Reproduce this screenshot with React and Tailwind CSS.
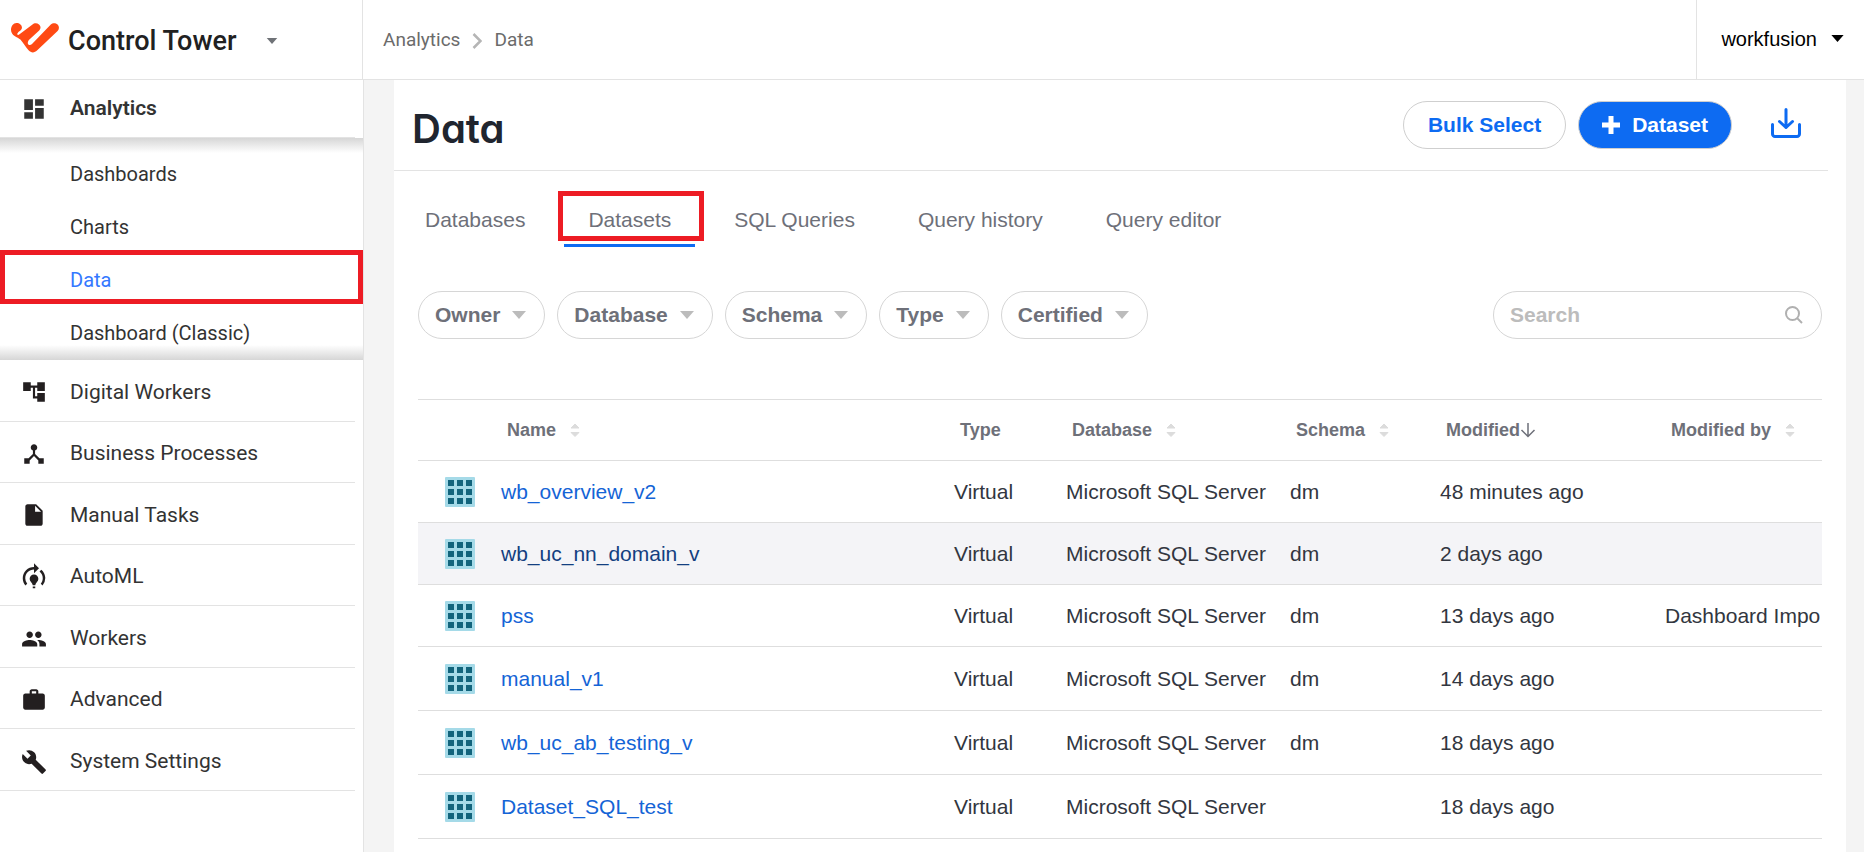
// src/App.jsx
import React, { useState } from 'react';
import {
  MdAccountTree,
  MdBuild,
  MdDashboard,
  MdDeviceHub,
  MdInsertDriveFile,
  MdModelTraining,
  MdPeople,
  MdWork,
} from 'react-icons/md';

const analyticsLinks = ['Dashboards', 'Charts', 'Data', 'Dashboard (Classic)'];

const sections = [
  { label: 'Digital Workers', Icon: MdAccountTree },
  { label: 'Business Processes', Icon: MdDeviceHub },
  { label: 'Manual Tasks', Icon: MdInsertDriveFile },
  { label: 'AutoML', Icon: MdModelTraining, size: 30 },
  { label: 'Workers', Icon: MdPeople },
  { label: 'Advanced', Icon: MdWork },
  { label: 'System Settings', Icon: MdBuild },
];

const tabs = ['Databases', 'Datasets', 'SQL Queries', 'Query history', 'Query editor'];

const filters = ['Owner', 'Database', 'Schema', 'Type', 'Certified'];

const columns = [
  { label: 'Name', width: 'w-auto', sort: 'both' },
  { label: 'Type', width: 'w-28' },
  { label: 'Database', width: 'w-56', sort: 'both' },
  { label: 'Schema', width: 'w-[150px]', sort: 'both' },
  { label: 'Modified', width: 'w-[225px]', sort: 'desc' },
  { label: 'Modified by', width: 'w-[162px]', sort: 'both' },
];

const datasets = [
  { name: 'wb_overview_v2', schema: 'dm', modified: '48 minutes ago', by: '' },
  { name: 'wb_uc_nn_domain_v', schema: 'dm', modified: '2 days ago', by: '', active: true },
  { name: 'pss', schema: 'dm', modified: '13 days ago', by: 'Dashboard Impo' },
  { name: 'manual_v1', schema: 'dm', modified: '14 days ago', by: '', tall: true },
  { name: 'wb_uc_ab_testing_v', schema: 'dm', modified: '18 days ago', by: '', tall: true },
  { name: 'Dataset_SQL_test', schema: '', modified: '18 days ago', by: '', tall: true },
];

function Logo() {
  return (
    <svg width="48" height="30" viewBox="0 0 48 30" fill="#ff4a14" className="mb-[3px]" aria-hidden="true">
      <path d="M5.5 0C9 0 11.6 2.8 10.8 5.6 10.2 7.8 7.4 8.6 6.4 10.4 5.8 11.8 7 12.6 8.2 11.6L21.5 1.6C23 0 26-.2 28 1.4 30 3 30 5.6 28.2 7.4L18.4 16.6C16.6 18.4 16.4 20.6 17.4 21.6 18.6 22.6 20 22 21 21L39.8 1.6C41.6-.3 44.6-.3 46.6 1.6 48.4 3.4 48.4 6 46.6 8L26 27.6C23.6 30 20 30 17.8 27.6 14.6 24.4 12 19.4 9.4 16.6 6.6 14 0 13 0 6.8 0 3 2.4 0 5.5 0Z" />
    </svg>
  );
}

function Caret({ className }) {
  return (
    <svg viewBox="0 0 14 8" className={className} fill="currentColor" aria-hidden="true">
      <path d="M0 0h14L7 8z" />
    </svg>
  );
}

function SortIcon() {
  return (
    <svg width="10" height="14" viewBox="0 0 10 14" fill="#dcdcdc" stroke="#dcdcdc" strokeLinejoin="round" aria-hidden="true">
      <path d="M1 5 5 1l4 4z" />
      <path d="M1 9.5 5 13.5l4-4z" />
    </svg>
  );
}

function DatasetIcon() {
  return (
    <svg width="30" height="30" viewBox="0 0 30 30" className="block">
      <rect width="30" height="30" rx="1" fill="#a5dae8" />
      {[3, 12, 21].map((y) =>
        [3, 12, 21].map((x) => <rect key={`${x}-${y}`} x={x} y={y} width="6" height="6" fill="#12647c" />)
      )}
    </svg>
  );
}

function Sidebar() {
  return (
    <nav className="w-[364px] shrink-0 border-r border-[#e3e3e3] bg-white text-[#333]">
      <div className="mr-2 border-b border-[#e3e3e3]">
        <a href="#analytics" className="flex h-[57px] items-center pl-[21px] text-[21px] font-semibold">
          <MdDashboard size={26} />
          <span className="ml-[23px]">Analytics</span>
        </a>
      </div>

      {/* Open section with inner shadows at the top and the bottom */}
      <ul className="bg-[linear-gradient(#d6d6d6,#fff_15px,#fff_calc(100%-15px),#d6d6d6)] pt-[9px] pb-px">
        {analyticsLinks.map((label) => (
          <li key={label} className="relative">
            <a
              href="#data"
              className={`flex h-[53px] items-center pl-[70px] text-[20px] ${label === 'Data' ? 'text-[#3478ff]' : ''}`}
            >
              {label}
            </a>
            {label === 'Data' && (
              <span className="pointer-events-none absolute inset-x-0 -top-[3px] h-[54px] border-[5px] border-[#ed1c24]" />
            )}
          </li>
        ))}
      </ul>

      <ul className="mr-2 grid h-[431px] auto-rows-fr">
        {sections.map(({ label, Icon, size = 26 }) => (
          <li key={label} className="border-b border-[#e3e3e3]">
            <a href="#section" className="flex h-full items-center pt-1 pl-[21px] text-[21px]">
              <span className="flex w-[26px] justify-center text-[#231f20]">
                <Icon size={size} className="shrink-0" />
              </span>
              <span className="ml-[23px]">{label}</span>
            </a>
          </li>
        ))}
      </ul>
    </nav>
  );
}

function App() {
  const [activeTab, setActiveTab] = useState('Datasets');
  const [search, setSearch] = useState('');

  return (
    <div className="flex min-h-screen flex-col bg-white font-[Roboto,sans-serif]">
      <header className="flex h-20 border-b border-[#e3e3e3]">
        <div className="flex w-[363px] shrink-0 items-center border-r border-[#e3e3e3] pl-[11px]">
          <Logo />
          <button className="ml-[9px] flex items-center gap-[30px] pt-[3px] text-[27px] font-medium text-[#212121]">
            Control Tower
            <Caret className="h-[6px] w-3 text-[#6f7277]" />
          </button>
        </div>
        <nav className="flex flex-1 items-center gap-3 pt-[2px] pl-5 text-[19px] text-[#6b6b6b]">
          <a href="#analytics">Analytics</a>
          <svg width="10" height="16" viewBox="0 0 10 16" fill="none" stroke="#b5b5b5" strokeWidth="2.5">
            <path d="m1.5 1 7 7-7 7" />
          </svg>
          <a href="#data">Data</a>
        </nav>
        <button className="flex items-center gap-[14px] border-l border-[#e3e3e3] pr-5 pb-[2px] pl-6 font-['Liberation_Sans',sans-serif] text-[20px] text-black">
          workfusion
          <Caret className="h-[7px] w-[13px]" />
        </button>
      </header>

      <div className="flex flex-1">
        <Sidebar />

        <div className="min-w-0 flex-1 bg-[#f4f4f4] pr-[18px] pl-[30px]">
          <main className="h-full bg-white font-['Liberation_Sans',sans-serif] text-[21px]">
            {/* Page title and actions */}
            <div className="mr-[18px] flex h-[91px] items-center border-b border-[#e3e3e3] pr-[27px] pl-[18px]">
              <h1 className="mt-2 flex-1 font-[Inter,sans-serif] text-[40px] font-semibold text-[#20252f] [font-feature-settings:'cv11']">
                Data
              </h1>
              <button className="h-12 rounded-full border border-[#cfcfcf] px-6 font-bold text-[#0d6bf2]">
                Bulk Select
              </button>
              <button className="ml-3 flex h-12 items-center gap-3 rounded-full border border-[#cfcfcf] bg-[#0d6bf2] px-[23px] font-bold text-white">
                <svg width="18" height="18" viewBox="0 0 18 18" stroke="currentColor" strokeWidth="5" aria-hidden="true">
                  <path d="M9 0v18M0 9h18" />
                </svg>
                Dataset
              </button>
              <button aria-label="Import dataset" className="mb-1 ml-[39px] text-[#0d6bf2]">
                <svg
                  width="30"
                  height="30"
                  viewBox="0 0 30 30"
                  fill="none"
                  stroke="currentColor"
                  strokeWidth="3"
                  strokeLinecap="round"
                  strokeLinejoin="round"
                >
                  <path d="M1.5 16.5V26a2.5 2.5 0 0 0 2.5 2.5h22a2.5 2.5 0 0 0 2.5-2.5v-9.5" />
                  <path d="M15 1.5V19.500M8.5 13.5l6.5 6 6.5-6" />
                </svg>
              </button>
            </div>

            {/* Tabs */}
            <div role="tablist" className="flex gap-[15px] pt-5 pl-[7px] text-[#6e7079]">
              {tabs.map((tab) => (
                <button
                  key={tab}
                  role="tab"
                  aria-selected={tab === activeTab}
                  onClick={() => setActiveTab(tab)}
                  className={`relative h-14 border-b-[3px] px-6 pt-1 ${tab === activeTab ? 'border-[#0d6bf2]' : 'border-transparent'}`}
                >
                  {tab}
                  {tab === 'Datasets' && (
                    <span className="pointer-events-none absolute top-0 -right-[9px] -left-[6px] h-[50px] border-[5px] border-[#ed1c24]" />
                  )}
                </button>
              ))}
            </div>

            <div className="px-6">
              {/* Filters and search */}
              <div className="mt-11 flex gap-3">
                {filters.map((filter) => (
                  <button
                    key={filter}
                    className="flex h-12 items-center gap-3 rounded-full border border-[#d6d6d6] pr-[18px] pl-4 font-bold text-[#6e7079]"
                  >
                    {filter}
                    <Caret className="h-2 w-[14px] text-[#bcbcbc]" />
                  </button>
                ))}
                <label className="ml-auto flex h-12 w-[329px] items-center rounded-full border border-[#d6d6d6] pr-[18px] pl-4">
                  <input
                    type="text"
                    aria-label="Search"
                    placeholder="Search"
                    value={search}
                    onChange={(e) => setSearch(e.target.value)}
                    className="min-w-0 flex-1 font-bold text-[#6e7079] outline-none placeholder:text-[#bcbcbc]"
                  />
                  <svg width="18" height="18" viewBox="0 0 18 18" fill="none" stroke="#b0b0b0" strokeWidth="2">
                    <circle cx="7.5" cy="7.5" r="6.5" />
                    <path d="m12 12 5 5" />
                  </svg>
                </label>
              </div>

              {/* Dataset list */}
              <table className="mt-[60px] w-full table-fixed border-separate border-spacing-0 text-left text-[#323640]">
                <thead>
                  <tr className="h-[62px] text-[18px] text-[#6e7079]">
                    <th className="w-[78px] border-y border-[#dedede]" />
                    {columns.map(({ label, width, sort }) => (
                      <th key={label} className={`border-y border-[#dedede] p-0 pl-[11px] ${width}`}>
                        <div className="flex items-center whitespace-nowrap">
                          {label}
                          {sort === 'both' && (
                            <span className="ml-[14px]">
                              <SortIcon />
                            </span>
                          )}
                          {sort === 'desc' && (
                            <svg width="16" height="16" viewBox="0 0 16 16" fill="none" stroke="#6e7079" strokeWidth="1.5">
                              <path d="M8 1v13M1.5 8 8 14.5 14.5 8" />
                            </svg>
                          )}
                        </div>
                      </th>
                    ))}
                  </tr>
                </thead>
                <tbody>
                  {datasets.map((row) => (
                    <tr
                      key={row.name}
                      className={`${row.tall ? 'h-16' : 'h-[62px]'} ${row.active ? 'bg-[#f4f4f7]' : ''} *:border-b *:border-[#dedede] *:p-0 *:pl-[5px]`}
                    >
                      <td>
                        <span className="block pl-[22px]">
                          <DatasetIcon />
                        </span>
                      </td>
                      <td>
                        <a href="#dataset" className={row.active ? 'text-[#133f80]' : 'text-[#1464d6]'}>
                          {row.name}
                        </a>
                      </td>
                      <td>Virtual</td>
                      <td className="whitespace-nowrap">Microsoft SQL Server</td>
                      <td>{row.schema}</td>
                      <td>{row.modified}</td>
                      <td className="whitespace-nowrap">{row.by}</td>
                    </tr>
                  ))}
                </tbody>
              </table>
            </div>
          </main>
        </div>
      </div>
    </div>
  );
}

export default App;
